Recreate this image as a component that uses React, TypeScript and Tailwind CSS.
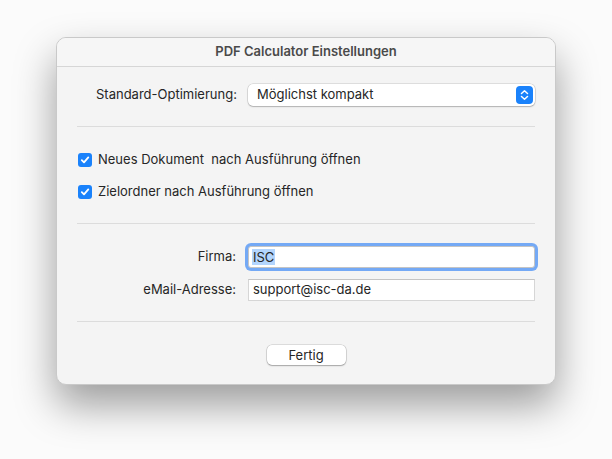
import { useState } from 'react';

// Small macOS style checkbox
function Check({ label }: { label: string }) {
  return (
    <label className="flex items-center gap-[6px] h-[16px]">
      <span className="w-[14px] h-[14px] rounded-[3px] bg-[#1a82fb] flex items-center justify-center">
        <svg width="10" height="10" viewBox="0 0 10 10">
          <path d="M1.8 5.2 L4 7.4 L8.3 2.4" fill="none" stroke="white" strokeWidth="1.8" strokeLinecap="round" strokeLinejoin="round" />
        </svg>
      </span>
      <span className="whitespace-pre">{label}</span>
    </label>
  );
}

function Divider() {
  return <div className="mx-[20px] h-px bg-[#dcdcdc]" />;
}

export default function App() {
  const [email] = useState('support@isc-da.de');

  return (
    <div
      className="w-[612px] h-[459px] bg-[#fbfbfb] pt-[37px] pl-[56px] text-[13px] text-[#262626]"
      style={{ fontFamily: 'Inter, "Liberation Sans", Arial, sans-serif' }}
    >
      <div className="w-[500px] h-[348px] bg-[#f4f4f4] rounded-[10px] border border-[#c9c9c9] shadow-[0_20px_40px_rgba(0,0,0,0.38)] overflow-hidden flex flex-col">
        {/* Title bar */}
        <div className="h-[29px] flex items-center justify-center font-semibold text-[#4a4a4a] bg-[#f6f6f6] border-b border-[#d6d6d6]">
          PDF Calculator Einstellungen
        </div>

        {/* Optimierung */}
        <div className="flex items-center pt-[17px] pb-[20px] pl-[39px]">
          <span className="w-[140px] text-right whitespace-nowrap">Standard-Optimierung:</span>
          <div className="ml-[12px] w-[287px] h-[22px] bg-white rounded-[5px] shadow-[0_0_0_0.5px_rgba(0,0,0,0.18),0_1px_1.5px_rgba(0,0,0,0.2)] flex items-center pl-[9px] pr-[2px]">
            <span className="flex-1">Möglichst kompakt</span>
            <span className="w-[17px] h-[18px] rounded-[4px] bg-[#1a82fb] flex items-center justify-center">
              <svg width="9" height="12" viewBox="0 0 9 12">
                <path d="M1.5 4.5 L4.5 1.8 L7.5 4.5 M1.5 7.5 L4.5 10.2 L7.5 7.5" fill="none" stroke="white" strokeWidth="1.5" strokeLinecap="round" strokeLinejoin="round" />
              </svg>
            </span>
          </div>
        </div>

        <Divider />

        {/* Checkboxes */}
        <div className="flex flex-col gap-[16px] pl-[21px] pt-[25px] pb-[23px]">
          <Check label="Neues Dokument  nach Ausführung öffnen" />
          <Check label="Zielordner nach Ausführung öffnen" />
        </div>

        <Divider />

        {/* Firma / Mail */}
        <div className="flex flex-col pl-[39px] pt-[22px] pb-[20px]">
          <div className="flex items-center">
            <span className="w-[140px] text-right">Firma:</span>
            <div className="ml-[12px] w-[287px] h-[22px] bg-white rounded-[3px] border border-[#c4c4c4] shadow-[0_0_0_3px_rgba(74,144,245,0.75)] flex items-center pl-[3px]">
              <span className="bg-[#b3d5fd] px-[1px] leading-[16px]">ISC</span>
            </div>
          </div>
          <div className="flex items-center mt-[11px]">
            <span className="w-[140px] text-right">eMail-Adresse:</span>
            <div className="ml-[12px] w-[287px] h-[22px] bg-white border border-[#d6d6d6] border-t-[#c4c4c4] flex items-center pl-[4px]">
              {email}
            </div>
          </div>
        </div>

        <Divider />

        {/* Footer */}
        <div className="flex justify-center pt-[23px]">
          <button className="w-[79px] h-[20px] bg-white rounded-[5px] shadow-[0_0_0_0.5px_rgba(0,0,0,0.2),0_1px_1.5px_rgba(0,0,0,0.25)] text-[13px] leading-[20px] text-[#262626]">
            Fertig
          </button>
        </div>
      </div>
    </div>
  );
}
